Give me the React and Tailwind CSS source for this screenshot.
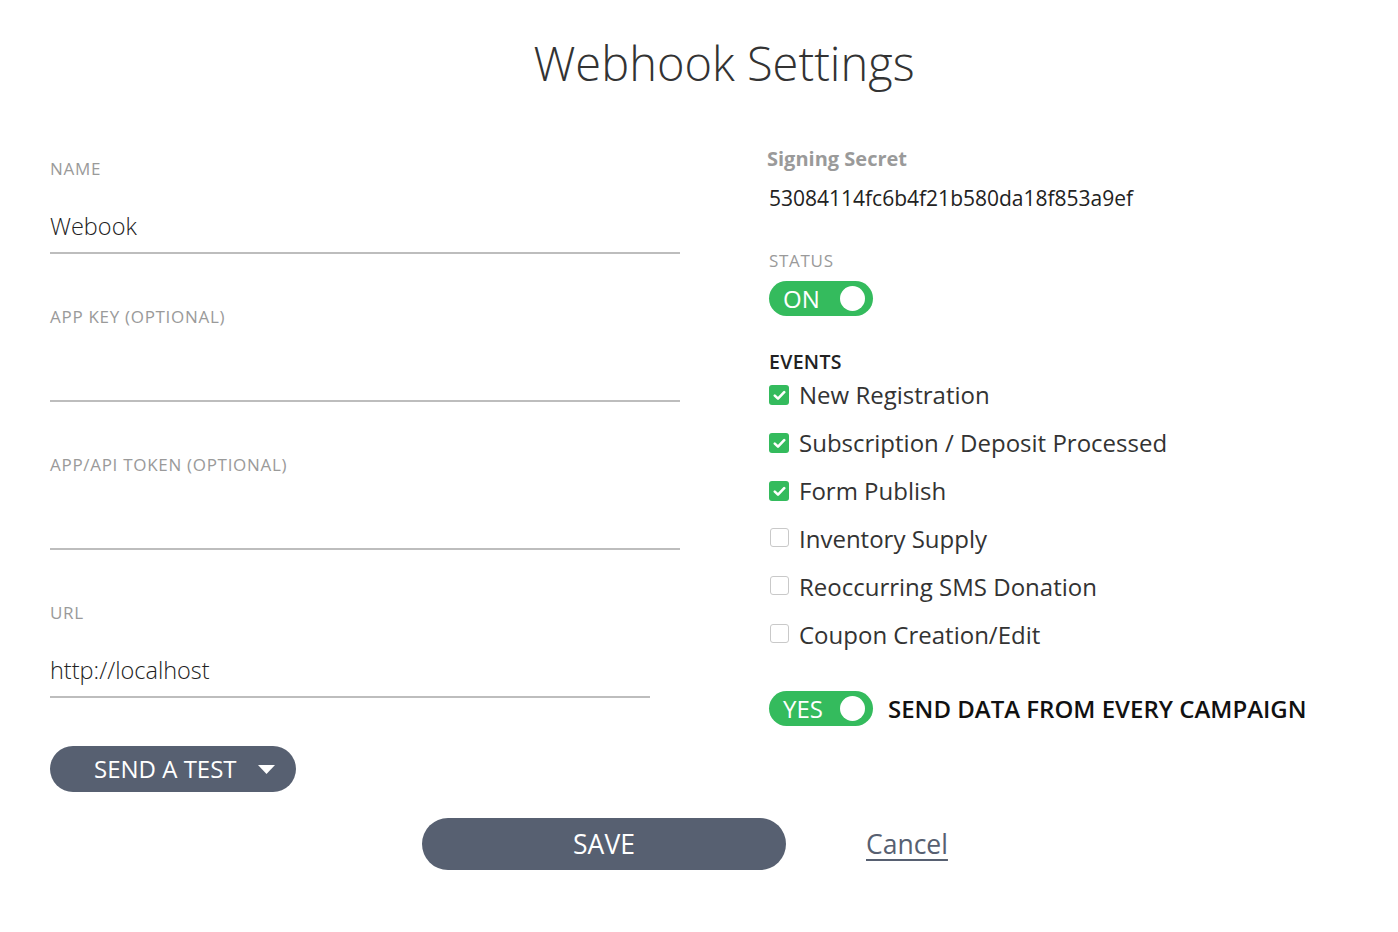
import { useState } from 'react';

const GREEN = 'bg-[#34bb5d]';

function Field({ label, value, width = 'w-[630px]', mt = 'mt-[52px]' }) {
  return (
    <div className={`${mt} ${width}`}>
      <div className="text-[17px] leading-[22px] text-[#9a9a9a] uppercase tracking-[0.7px]">{label}</div>
      <div className="mt-[31px] h-[30px] text-[23.5px] leading-[30px] font-light text-[#222]">{value}</div>
      <div className="mt-[11px] h-[2px] bg-[#bdbdbd]" />
    </div>
  );
}

function Toggle({ on, label, onClick }) {
  return (
    <button
      onClick={onClick}
      className={`flex items-center justify-between w-[104px] h-[35px] rounded-full ${on ? GREEN : 'bg-[#c8c8c8]'} pl-[14px] pr-[8px]`}
    >
      <span className="text-[24px] leading-none font-medium text-white">{label}</span>
      <span className="w-[25px] h-[25px] rounded-full bg-white" />
    </button>
  );
}

function Check({ checked, label, onClick }) {
  return (
    <div className="flex items-center h-[30px] cursor-pointer" onClick={onClick}>
      <div className="w-[20px] flex justify-center">
        {checked ? (
          <span className={`w-[20px] h-[20px] rounded-[3px] ${GREEN} flex items-center justify-center`}>
            <svg width="13" height="11" viewBox="0 0 13 11" fill="none">
              <path d="M1.8 5.6 L5 8.6 L11.2 2.2" stroke="white" strokeWidth="2.6" strokeLinecap="round" strokeLinejoin="round" />
            </svg>
          </span>
        ) : (
          <span className="w-[19px] h-[19px] rounded-[3px] border border-[#c9c9c9] bg-white -mt-[3px]" />
        )}
      </div>
      <span className="ml-[10px] text-[24px] leading-[30px] text-[#333]">{label}</span>
    </div>
  );
}

export default function App() {
  const [status, setStatus] = useState(true);
  const [every, setEvery] = useState(true);
  const [events, setEvents] = useState([
    { label: 'New Registration', on: true },
    { label: 'Subscription / Deposit Processed', on: true },
    { label: 'Form Publish', on: true },
    { label: 'Inventory Supply', on: false },
    { label: 'Reoccurring SMS Donation', on: false },
    { label: 'Coupon Creation/Edit', on: false },
  ]);

  const toggleEvent = (i) =>
    setEvents((ev) => ev.map((e, j) => (j === i ? { ...e, on: !e.on } : e)));

  return (
    <div className="w-[1398px] min-h-[932px] bg-white font-['Open_Sans',sans-serif] text-[#333]">
      <h1 className="pt-[33px] pl-[50px] text-center text-[47px] leading-[60px] font-light text-[#333]">
        Webhook Settings
      </h1>

      <div className="mt-[47px] pl-[50px] flex">
        {/* left column */}
        <div className="w-[630px] pt-[18px]">
          <Field label="Name" value="Webook" mt="mt-0" />
          <Field label="App Key (optional)" value="" />
          <Field label="App/API Token (optional)" value="" />
          <Field label="URL" value="http://localhost" width="w-[600px]" />

          <button className="mt-[48px] flex items-center w-[246px] h-[46px] rounded-full bg-[#576071] pl-[44px] text-white">
            <span className="text-[24px] leading-none">SEND A TEST</span>
            <svg className="ml-[21px]" width="17" height="9" viewBox="0 0 17 9">
              <path d="M0 0 H17 L8.5 9 Z" fill="white" />
            </svg>
          </button>
        </div>

        {/* right column */}
        <div className="ml-[89px] pt-[7px]">
          <div className="text-[20px] leading-[24px] font-bold text-[#9a9a9a] -ml-[2px]">Signing Secret</div>
          <div className="mt-[13px] text-[21px] leading-[28px] text-[#222]">53084114fc6b4f21b580da18f853a9ef</div>

          <div className="mt-[38px] text-[17px] leading-[22px] tracking-[0.7px] text-[#9a9a9a]">STATUS</div>
          <div className="mt-[9px]">
            <Toggle on={status} label={status ? 'ON' : 'OFF'} onClick={() => setStatus(!status)} />
          </div>

          <div className="mt-[33px] text-[19.5px] leading-[26px] font-semibold tracking-[0.3px] text-[#222]">EVENTS</div>
          <div className="mt-[5px] flex flex-col gap-[18px]">
            {events.map((e, i) => (
              <Check key={e.label} checked={e.on} label={e.label} onClick={() => toggleEvent(i)} />
            ))}
          </div>

          <div className="mt-[41px] flex items-center">
            <Toggle on={every} label={every ? 'YES' : 'NO'} onClick={() => setEvery(!every)} />
            <span className="ml-[15px] text-[24px] leading-[30px] font-semibold text-[#111]">
              SEND DATA FROM EVERY CAMPAIGN
            </span>
          </div>
        </div>
      </div>

      <div className="mt-[26px] pl-[422px] flex items-center">
        <button className="w-[364px] h-[52px] rounded-full bg-[#576071] text-white text-[26.5px] leading-none">
          SAVE
        </button>
        <a href="#" className="ml-[80px] text-[26.5px] leading-none text-[#576071] underline underline-offset-[5px]">
          Cancel
        </a>
      </div>
    </div>
  );
}
